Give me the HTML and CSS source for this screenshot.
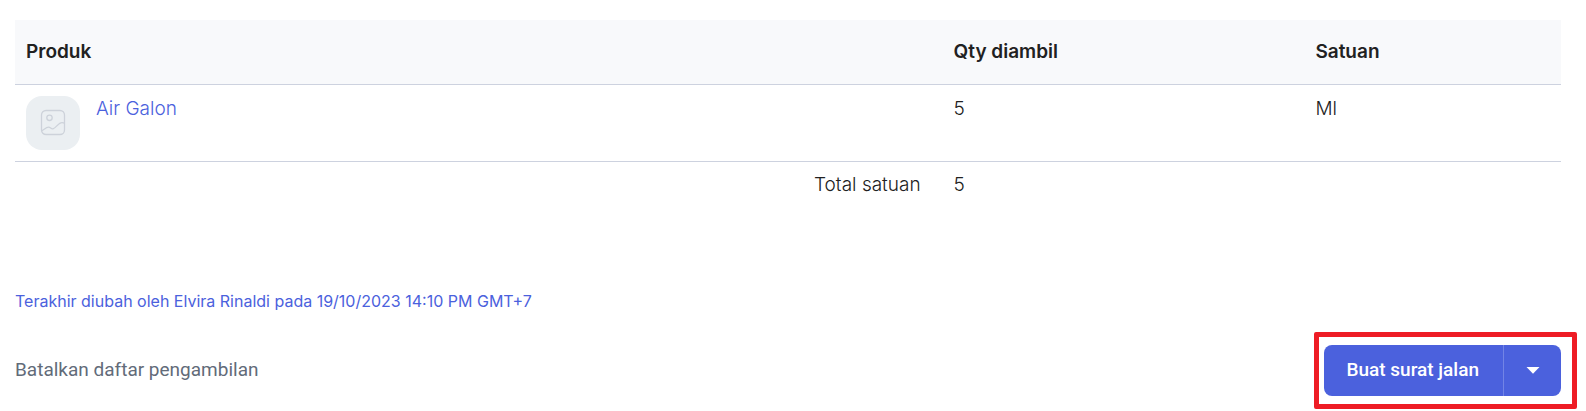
FILE: index.html
```html
<!DOCTYPE html>
<html lang="id">
<head>
<meta charset="utf-8">
<meta name="viewport" content="width=device-width, initial-scale=1">
<title>Daftar pengambilan</title>
<link rel="stylesheet" href="styles.css">
</head>
<body>
<main class="page">
  <table class="items">
    <colgroup>
      <col class="col-product">
      <col class="col-qty">
      <col class="col-unit">
    </colgroup>
    <thead>
      <tr><th scope="col">Produk</th><th scope="col">Qty diambil</th><th scope="col">Satuan</th></tr>
    </thead>
    <tbody>
      <tr>
        <td>
          <div class="product">
            <span class="thumb">
              <svg width="26" height="28" viewBox="0 0 26 28" fill="none" stroke="currentColor" stroke-width="1.3" aria-hidden="true">
                <rect x="1.5" y="1.5" width="23" height="24" rx="4.5"/>
                <circle cx="9.5" cy="8.8" r="2.7"/>
                <path d="M1.5 21.8C4 20.8 5.8 18.2 8.6 18.2C10.6 18.2 11 20.2 13 19.8C16 19 18.5 13.6 22 13.6C23 13.6 24 13.9 24.5 14.4"/>
              </svg>
            </span>
            <a class="link" href="#produk">Air Galon</a>
          </div>
        </td>
        <td>5</td>
        <td>Ml</td>
      </tr>
    </tbody>
    <tfoot>
      <tr><td class="total-label">Total satuan</td><td>5</td><td></td></tr>
    </tfoot>
  </table>

  <a class="link audit" href="#riwayat">Terakhir diubah oleh Elvira Rinaldi pada 19/10/2023 14:10 PM GMT+7</a>

  <div class="actions">
    <button class="cancel" type="button">Batalkan daftar pengambilan</button>
    <div class="split">
      <button class="primary" type="button">Buat surat jalan</button>
      <button class="primary toggle" type="button" aria-label="Pilihan lainnya">
        <svg width="14" height="7" viewBox="0 0 14 7" fill="currentColor" aria-hidden="true"><path d="M0.5 0H13.5L7 6.8Z"/></svg>
      </button>
    </div>
  </div>
</main>
</body>
</html>
```
FILE: styles.css
```css
* {
  box-sizing: border-box;
}

body {
  margin: 0;
  background: #fff;
  color: #212121;
  font-family: Inter, "Liberation Sans", sans-serif;
  font-size: 19px;
  font-weight: 300;
  line-height: 26px;
}

.page {
  padding: 20px 25px 15px 15px;
}

.items {
  width: 100%;
  table-layout: fixed;
  border-collapse: separate;
  border-spacing: 0;
}

.col-product {
  width: 60%;
}

.col-unit {
  width: 16.6%;
}

.items th {
  padding: 19px 11px;
  border-bottom: 1px solid #cdd2df;
  background: #f8f9fb;
  font-weight: 600;
  text-align: left;
}

.items td {
  padding: 11px;
  vertical-align: top;
}

.items tbody td {
  border-bottom: 1px solid #cdd2df;
}

.items tfoot td {
  padding-top: 10px;
}

.items .total-label {
  padding-right: 22px;
  text-align: right;
}

.product {
  display: flex;
  align-items: flex-start;
  gap: 16px;
}

.thumb {
  display: flex;
  align-items: center;
  justify-content: center;
  width: 54px;
  height: 54px;
  border-radius: 16px;
  background: #ebeff2;
  color: #cdd2da;
}

.link {
  color: #4b61dd;
  text-decoration: none;
}

.audit {
  display: block;
  margin-top: 79px;
  font-size: 16px;
  font-weight: 400;
}

.actions {
  display: flex;
  align-items: center;
  justify-content: space-between;
  margin-top: 31px;
}

.cancel,
.primary {
  margin: 0;
  padding: 0 0 2px;
  border: 0;
  background: none;
  font-family: Roboto, "Liberation Sans", sans-serif;
  font-size: 19px;
  line-height: 24px;
  cursor: pointer;
}

.cancel {
  color: #626b79;
  font-weight: 400;
}

.split {
  position: relative;
  display: flex;
  height: 51px;
}

.split::after {
  content: "";
  position: absolute;
  inset: -13px -16px -13px -10px;
  border: 5px solid #ee1c25;
  border-radius: 2px;
  pointer-events: none;
}

.primary {
  padding: 0 24px 2px 22px;
  border-radius: 8px 0 0 8px;
  background: #4b61dd;
  color: #fff;
  font-weight: 500;
}

.toggle {
  display: flex;
  align-items: center;
  justify-content: center;
  width: 58px;
  padding: 0;
  border-left: 1px solid #7284e5;
  border-radius: 0 8px 8px 0;
}
```
